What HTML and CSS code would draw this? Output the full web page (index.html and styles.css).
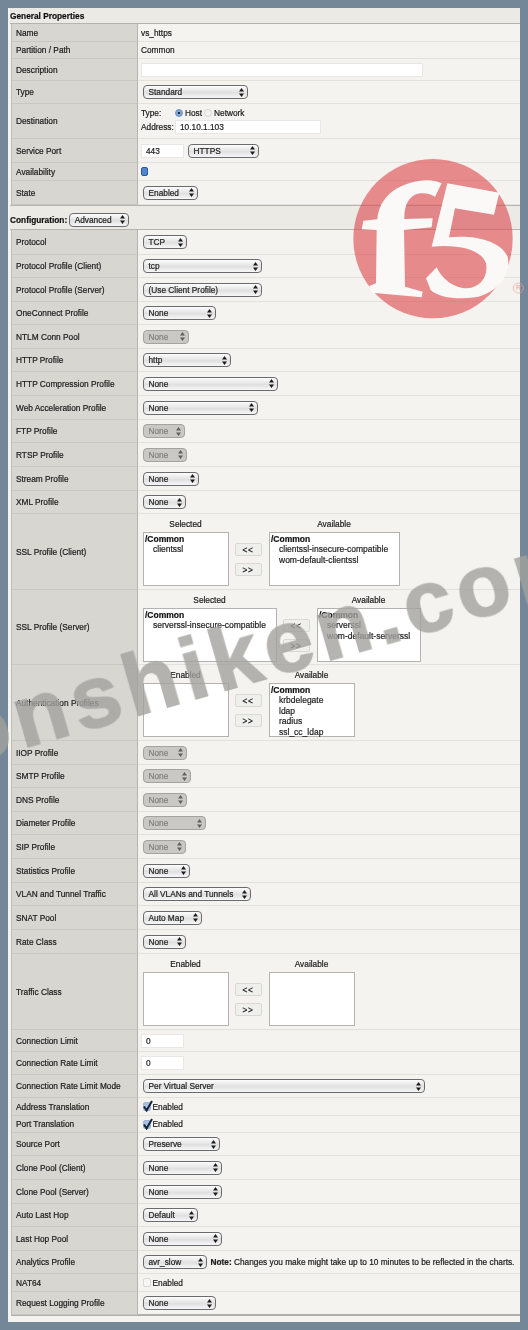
FILE: index.html
```html
<!DOCTYPE html>
<html lang="en">
<head>
<meta charset="utf-8">
<title>Virtual Server Properties</title>
<link rel="stylesheet" href="styles.css">
</head>
<body>
<svg class="defs" aria-hidden="true"><symbol id="ud" viewBox="0 0 5 9"><path d="M2.5 0 L5 3.4 H0 Z M2.5 9 L5 5.6 H0 Z" fill="#1c1c1c"/></symbol><symbol id="ck" viewBox="0 0 10 12"><path d="M1 6.5 L3.6 10.5 L9 1" fill="none" stroke="#16243c" stroke-width="2"/></symbol></svg>
<main class="panel">
  <div class="sec first h16"><b>General Properties</b></div>
  <div class="row h18"><div class="lab">Name</div><div class="val">vs_https</div></div>
  <div class="row h17"><div class="lab">Partition / Path</div><div class="val">Common</div></div>
  <div class="row h22"><div class="lab">Description</div><div class="val"><div class="inp w282"></div></div></div>
  <div class="row h23"><div class="lab">Type</div><div class="val"><div class="sel w105"><span>Standard</span><svg><use href="#ud"/></svg></div></div></div>
  <div class="row h35"><div class="lab">Destination</div><div class="val stack">
    <div class="line"><span class="cap">Type:</span><i class="radio on"></i><span class="rt">Host</span><i class="radio"></i><span class="rt">Network</span></div>
    <div class="line"><span class="cap">Address:</span><div class="inp w146">10.10.1.103</div></div>
  </div></div>
  <div class="row h24"><div class="lab">Service Port</div><div class="val"><div class="inp w43">443</div><div class="sel w71 after"><span>HTTPS</span><svg><use href="#ud"/></svg></div></div></div>
  <div class="row h18"><div class="lab">Availability</div><div class="val"><i class="avail"></i></div></div>
  <div class="row h24"><div class="lab">State</div><div class="val"><div class="sel w55"><span>Enabled</span><svg><use href="#ud"/></svg></div></div></div>
  <div class="sec second h25"><b>Configuration:</b><div class="sel w60 insec"><span>Advanced</span><svg><use href="#ud"/></svg></div></div>
  <div class="row h25"><div class="lab">Protocol</div><div class="val"><div class="sel w44"><span>TCP</span><svg><use href="#ud"/></svg></div></div></div>
  <div class="row h23"><div class="lab">Protocol Profile (Client)</div><div class="val"><div class="sel w119"><span>tcp</span><svg><use href="#ud"/></svg></div></div></div>
  <div class="row h24"><div class="lab">Protocol Profile (Server)</div><div class="val"><div class="sel w119"><span>(Use Client Profile)</span><svg><use href="#ud"/></svg></div></div></div>
  <div class="row h23"><div class="lab">OneConnect Profile</div><div class="val"><div class="sel w73"><span>None</span><svg><use href="#ud"/></svg></div></div></div>
  <div class="row h24"><div class="lab">NTLM Conn Pool</div><div class="val"><div class="sel off w46"><span>None</span><svg><use href="#ud"/></svg></div></div></div>
  <div class="row h23"><div class="lab">HTTP Profile</div><div class="val"><div class="sel w88"><span>http</span><svg><use href="#ud"/></svg></div></div></div>
  <div class="row h24"><div class="lab">HTTP Compression Profile</div><div class="val"><div class="sel w135"><span>None</span><svg><use href="#ud"/></svg></div></div></div>
  <div class="row h24"><div class="lab">Web Acceleration Profile</div><div class="val"><div class="sel w115"><span>None</span><svg><use href="#ud"/></svg></div></div></div>
  <div class="row h23"><div class="lab">FTP Profile</div><div class="val"><div class="sel off w42"><span>None</span><svg><use href="#ud"/></svg></div></div></div>
  <div class="row h24"><div class="lab">RTSP Profile</div><div class="val"><div class="sel off w44"><span>None</span><svg><use href="#ud"/></svg></div></div></div>
  <div class="row h24"><div class="lab">Stream Profile</div><div class="val"><div class="sel w56"><span>None</span><svg><use href="#ud"/></svg></div></div></div>
  <div class="row h23"><div class="lab">XML Profile</div><div class="val"><div class="sel w43"><span>None</span><svg><use href="#ud"/></svg></div></div></div>
  <div class="row h76"><div class="lab">SSL Profile (Client)</div><div class="val dual">
    <div class="col"><div class="hd">Selected</div><div class="box w86"><b>/Common</b><p>clientssl</p></div></div>
    <div class="btns"><div class="btn">&lt;&lt;</div><div class="btn">&gt;&gt;</div></div>
    <div class="col"><div class="hd">Available</div><div class="box w131"><b>/Common</b><p>clientssl-insecure-compatible</p><p>wom-default-clientssl</p></div></div>
  </div></div>
  <div class="row h75"><div class="lab">SSL Profile (Server)</div><div class="val dual">
    <div class="col"><div class="hd">Selected</div><div class="box w134"><b>/Common</b><p>serverssl-insecure-compatible</p></div></div>
    <div class="btns"><div class="btn">&lt;&lt;</div><div class="btn">&gt;&gt;</div></div>
    <div class="col"><div class="hd">Available</div><div class="box w104"><b>/Common</b><p>serverssl</p><p>wom-default-serverssl</p></div></div>
  </div></div>
  <div class="row h76"><div class="lab">Authentication Profiles</div><div class="val dual">
    <div class="col"><div class="hd">Enabled</div><div class="box w86"></div></div>
    <div class="btns"><div class="btn">&lt;&lt;</div><div class="btn">&gt;&gt;</div></div>
    <div class="col"><div class="hd">Available</div><div class="box w86"><b>/Common</b><p>krbdelegate</p><p>ldap</p><p>radius</p><p>ssl_cc_ldap</p></div></div>
  </div></div>
  <div class="row h24"><div class="lab">IIOP Profile</div><div class="val"><div class="sel off w44"><span>None</span><svg><use href="#ud"/></svg></div></div></div>
  <div class="row h23"><div class="lab">SMTP Profile</div><div class="val"><div class="sel off w48"><span>None</span><svg><use href="#ud"/></svg></div></div></div>
  <div class="row h24"><div class="lab">DNS Profile</div><div class="val"><div class="sel off w44"><span>None</span><svg><use href="#ud"/></svg></div></div></div>
  <div class="row h23"><div class="lab">Diameter Profile</div><div class="val"><div class="sel off w63"><span>None</span><svg><use href="#ud"/></svg></div></div></div>
  <div class="row h24"><div class="lab">SIP Profile</div><div class="val"><div class="sel off w43"><span>None</span><svg><use href="#ud"/></svg></div></div></div>
  <div class="row h24"><div class="lab">Statistics Profile</div><div class="val"><div class="sel w47"><span>None</span><svg><use href="#ud"/></svg></div></div></div>
  <div class="row h23"><div class="lab">VLAN and Tunnel Traffic</div><div class="val"><div class="sel w108"><span>All VLANs and Tunnels</span><svg><use href="#ud"/></svg></div></div></div>
  <div class="row h24"><div class="lab">SNAT Pool</div><div class="val"><div class="sel w59"><span>Auto Map</span><svg><use href="#ud"/></svg></div></div></div>
  <div class="row h24"><div class="lab">Rate Class</div><div class="val"><div class="sel w43"><span>None</span><svg><use href="#ud"/></svg></div></div></div>
  <div class="row h76"><div class="lab">Traffic Class</div><div class="val dual">
    <div class="col"><div class="hd">Enabled</div><div class="box w86"></div></div>
    <div class="btns"><div class="btn">&lt;&lt;</div><div class="btn">&gt;&gt;</div></div>
    <div class="col"><div class="hd">Available</div><div class="box w86"></div></div>
  </div></div>
  <div class="row h22"><div class="lab">Connection Limit</div><div class="val"><div class="inp w43">0</div></div></div>
  <div class="row h23"><div class="lab">Connection Rate Limit</div><div class="val"><div class="inp w43">0</div></div></div>
  <div class="row h23"><div class="lab">Connection Rate Limit Mode</div><div class="val"><div class="sel w282"><span>Per Virtual Server</span><svg><use href="#ud"/></svg></div></div></div>
  <div class="row h18"><div class="lab">Address Translation</div><div class="val"><i class="chk on"><svg><use href="#ck"/></svg></i><span class="rt">Enabled</span></div></div>
  <div class="row h17"><div class="lab">Port Translation</div><div class="val"><i class="chk on"><svg><use href="#ck"/></svg></i><span class="rt">Enabled</span></div></div>
  <div class="row h23"><div class="lab">Source Port</div><div class="val"><div class="sel w77"><span>Preserve</span><svg><use href="#ud"/></svg></div></div></div>
  <div class="row h24"><div class="lab">Clone Pool (Client)</div><div class="val"><div class="sel w79"><span>None</span><svg><use href="#ud"/></svg></div></div></div>
  <div class="row h24"><div class="lab">Clone Pool (Server)</div><div class="val"><div class="sel w79"><span>None</span><svg><use href="#ud"/></svg></div></div></div>
  <div class="row h23"><div class="lab">Auto Last Hop</div><div class="val"><div class="sel w55"><span>Default</span><svg><use href="#ud"/></svg></div></div></div>
  <div class="row h24"><div class="lab">Last Hop Pool</div><div class="val"><div class="sel w79"><span>None</span><svg><use href="#ud"/></svg></div></div></div>
  <div class="row h23"><div class="lab">Analytics Profile</div><div class="val"><div class="sel w64"><span>avr_slow</span><svg><use href="#ud"/></svg></div><span class="note"><b>Note:</b> Changes you make might take up to 10 minutes to be reflected in the charts.</span></div></div>
  <div class="row h18"><div class="lab">NAT64</div><div class="val"><i class="chk"></i><span class="rt">Enabled</span></div></div>
  <div class="row h24"><div class="lab">Request Logging Profile</div><div class="val"><div class="sel w73"><span>None</span><svg><use href="#ud"/></svg></div></div></div>
</main>
<svg class="logo" viewBox="0 0 564 540" role="img" aria-label="F5 logo">
  <circle cx="279" cy="266" r="239" fill="#dc4f55" fill-opacity=".64"/>
  <path fill="#fbf9f7" d="M305 100 C270 82 205 92 160 122 C125 148 114 180 112 208 L70 212 L65 238 L110 240 L108 400 L88 408 L96 428 L245 442 L248 425 L195 410 L192 240 L275 232 L278 205 L193 207 C192 170 205 135 240 130 C260 128 275 134 285 140 Z"/>
  <path fill="#fbf9f7" d="M322 100 L478 128 L462 194 L345 175 L327 262 C400 255 480 270 503 320 C515 375 470 430 405 442 C350 450 295 442 272 420 L258 385 L290 352 C305 385 340 415 380 415 C425 412 445 375 438 340 C425 300 360 282 275 290 Z"/>
  <circle cx="535" cy="414" r="15" fill="none" stroke="#e9a0a2" stroke-width="2"/>
  <text x="535" y="421" class="reg">R</text>
</svg>
<div class="mark">onshiken.com</div>
</body>
</html>
```
FILE: styles.css
```css
* { box-sizing: border-box; }
html, body { margin: 0; padding: 0; }
body {
  width: 528px;
  height: 1330px;
  overflow: hidden;
  position: relative;
  background: #748798;
  font-family: "Liberation Sans", Arial, sans-serif;
  font-size: 8.3px;
  color: #1a1a1a;
}
.defs { position: absolute; width: 0; height: 0; }
.panel {
  margin: 8px 8px 0 8px;
  width: 512px;
  height: 1314px;
  background: #f5f3ef;
  padding: 0 0 6px 3px;
  filter: blur(.7px);
  -webkit-text-stroke: .2px currentColor;
}
.sec {
  display: flex;
  align-items: center;
  background: #ebeae5;
  border-bottom: 1px solid #b5b4af;
  color: #111;
}
.first { padding-top: 1px; margin-left: -1px; }
.second { padding-top: 4px; margin-left: -1px; border-top: 1px solid #b5b4af; }
.insec { margin-left: 3px; }
.row {
  display: flex;
  border-bottom: 1px solid #e3e1dc;
}
.row:last-child { border-bottom: 2px solid #b0afaa; }
.lab {
  width: 127px;
  flex: none;
  display: flex;
  align-items: center;
  padding-left: 4px;
  margin-bottom: -1px;
  background: #d8d6d1;
  border-left: 1px solid #bdbcb7;
  border-right: 1px solid #b5b4af;
  border-bottom: 1px solid #c9c7c2;
}
.val {
  flex: 1;
  display: flex;
  align-items: center;
  padding-left: 3px;
  min-width: 0;
}
.stack { flex-direction: column; align-items: flex-start; justify-content: center; gap: 2px; }
.line { display: flex; align-items: center; }
.cap { width: 34px; }
.rt { margin-left: 2px; margin-right: 2px; }
.sel {
  display: flex;
  align-items: center;
  justify-content: space-between;
  height: 14px;
  margin-left: 1.5px;
  padding: 0 3px 0 5px;
  border: 1.5px solid #6a6b6f;
  border-radius: 4px;
  background: linear-gradient(#fdfdfd, #e0e0e0 55%, #f7f7f7);
  color: #222;
  flex: none;
  white-space: nowrap;
}
.sel svg { width: 5px; height: 9px; flex: none; }
.off {
  border-color: #a3a3a0;
  background: #c9c8c4;
  color: #80807d;
}
.off svg { opacity: .6; }
.after { margin-left: 3.5px; }
.inp {
  height: 14px;
  background: #fff;
  border: 1px solid #e8e7e3;
  padding: 0 4px;
  line-height: 12px;
  flex: none;
}
.w42 { width: 42px; } .w43 { width: 43px; } .w44 { width: 44px; } .w46 { width: 46px; }
.w47 { width: 47px; } .w48 { width: 48px; } .w55 { width: 55.5px; } .w56 { width: 56px; }
.w59 { width: 59px; } .w60 { width: 60px; } .w63 { width: 63px; } .w64 { width: 64px; }
.w71 { width: 71px; } .w73 { width: 73px; } .w77 { width: 77px; } .w79 { width: 79px; }
.w86 { width: 86px; } .w88 { width: 88px; } .w104 { width: 104px; } .w105 { width: 105px; }
.w108 { width: 108px; } .w115 { width: 115px; } .w119 { width: 119px; } .w131 { width: 131px; }
.w134 { width: 134px; } .w135 { width: 135px; } .w146 { width: 146px; } .w282 { width: 282px; }
.h16 { height: 16px; } .h17 { height: 17px; } .h18 { height: 18px; } .h22 { height: 22px; }
.h23 { height: 23px; } .h24 { height: 24px; } .h25 { height: 25px; } .h35 { height: 35px; }
.h75 { height: 75px; } .h76 { height: 76px; }
.radio {
  display: block;
  width: 8px;
  height: 8px;
  border-radius: 50%;
  border: 1px solid #d5d5d5;
  background: #f4f4f4;
}
.radio.on { background: radial-gradient(circle, #1c2c44 25%, #7fa6d6 35%); border-color: #6e93c4; }
.avail {
  display: block;
  width: 7px;
  height: 9px;
  border-radius: 2px;
  background: #4f86cf;
  border: 1px solid #31598f;
}
.chk {
  display: block;
  width: 8px;
  height: 9px;
  margin-left: 1.5px;
  border-radius: 2px;
  border: 1px solid #d8d8d8;
  background: #f6f6f6;
  position: relative;
}
.chk.on { background: #a9c2e4; border-color: #a0b6d6; }
.chk svg { position: absolute; left: -1px; top: -3px; width: 10px; height: 12px; }
.note { margin-left: 4px; white-space: nowrap; }
.dual { align-items: flex-start; padding-top: 5px; padding-left: 4.5px; }
.hd { height: 13px; line-height: 11px; text-align: center; }
.box {
  height: 54px;
  background: #fff;
  border: 1.5px solid #b2b2b0;
  padding: .5px 0 0 1.5px;
  line-height: 10.5px;
  font-size: 8.5px;
  color: #222;
}
.box p { margin: 0; padding-left: 8px; white-space: nowrap; }
.box b { display: block; color: #111; }
.btns {
  display: flex;
  flex-direction: column;
  gap: 7px;
  margin: 24px 7px 0 6px;
}
.btn {
  width: 27px;
  height: 13px;
  line-height: 12px;
  text-align: center;
  background: #efefec;
  border: 1px solid #d8d8d5;
  border-radius: 2px;
  letter-spacing: .6px;
}
.logo {
  position: absolute;
  left: 340px;
  top: 150px;
  width: 188px;
  height: 180px;
}
.reg { font-size: 20px; fill: #e9a0a2; text-anchor: middle; font-family: "Liberation Sans", sans-serif; }
.mark {
  position: absolute;
  left: -35px;
  top: 691px;
  font-family: "Liberation Sans", Arial, sans-serif;
  font-weight: 700;
  font-size: 88px;
  line-height: 88px;
  letter-spacing: 6px;
  white-space: nowrap;
  color: #a3a29e;
  -webkit-text-stroke: 1.5px #a3a29e;
  opacity: .8;
  transform: rotate(-16deg);
  transform-origin: 0 74.5px;
  filter: blur(.6px);
}
```
